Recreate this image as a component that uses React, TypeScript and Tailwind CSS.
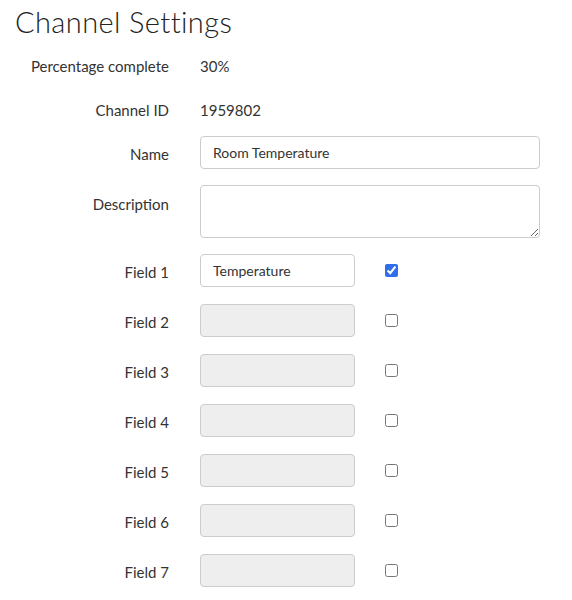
import { useState } from "react";

const fieldNames = ["Field 2", "Field 3", "Field 4", "Field 5", "Field 6", "Field 7"];

const Label = ({ children, pad }: { children: string; pad?: string }) => (
  <div className={`w-[169px] shrink-0 text-right text-[15px] text-[#333] ${pad ?? ""}`}>
    {children}
  </div>
);

const App = () => {
  const [field1, setField1] = useState(true);

  return (
    <div className="bg-white w-[572px] h-[600px] font-['Lato','Liberation_Sans',sans-serif] text-[#333]">
      {/* HEADING */}
      <h1 className="pl-[15px] pt-[5px] text-[29px] leading-[33px] font-light tracking-[0.4px] text-[#222]">
        Channel Settings
      </h1>

      {/* STATIC INFO */}
      <div className="flex items-center h-[22px] mt-[17px]">
        <Label>Percentage complete</Label>
        <div className="ml-[31px] text-[15px]">30%</div>
      </div>
      <div className="flex items-center h-[22px] mt-[22px]">
        <Label>Channel ID</Label>
        <div className="ml-[31px] text-[15px]">1959802</div>
      </div>

      {/* NAME */}
      <div className="flex items-center mt-[15px]">
        <Label pad="pt-[3px]">Name</Label>
        <input
          className="ml-[31px] w-[340px] h-[33px] rounded-[4px] border border-[#ccc] px-[12px] text-[14px] text-[#333] outline-none"
          defaultValue="Room Temperature"
        />
      </div>

      {/* DESCRIPTION */}
      <div className="flex mt-[16px]">
        <Label pad="self-start pt-[8px]">Description</Label>
        <textarea className="ml-[31px] w-[340px] h-[53px] rounded-[4px] border border-[#ccc] px-[12px] py-[6px] text-[14px] outline-none" />
      </div>

      {/* FIELDS */}
      <div className="flex items-center mt-[16px]">
        <Label pad="pt-[3px]">Field 1</Label>
        <input
          className="ml-[31px] w-[155px] h-[33px] rounded-[4px] border border-[#ccc] px-[12px] text-[14px] text-[#333] outline-none"
          defaultValue="Temperature"
        />
        <input
          type="checkbox"
          checked={field1}
          onChange={() => setField1(!field1)}
          className="ml-[30px] w-[13px] h-[13px] accent-[#2f6fec]"
        />
      </div>
      {fieldNames.map((name) => (
        <div key={name} className="flex items-center mt-[17px]">
          <Label pad="pt-[3px]">{name}</Label>
          <input
            disabled
            className="ml-[31px] w-[155px] h-[33px] rounded-[4px] border border-[#ccc] bg-[#eee] px-[12px] text-[14px] outline-none"
          />
          <input type="checkbox" className="ml-[30px] w-[13px] h-[13px]" />
        </div>
      ))}
    </div>
  );
};

export default App;
